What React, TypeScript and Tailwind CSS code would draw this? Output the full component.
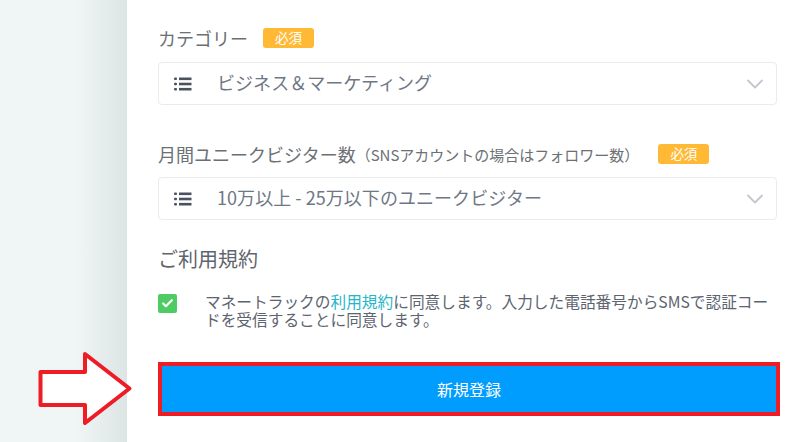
import { ChevronDown, Check } from "lucide-react";

const font = { fontFamily: '"Noto Sans CJK JP", "Noto Sans", sans-serif' };

function RequiredBadge() {
  return (
    <span className="flex h-[20px] w-[51px] items-center justify-center rounded-[3px] bg-[#ffb934] text-[13.5px] leading-none text-white">
      必須
    </span>
  );
}

function ListIcon() {
  return (
    <svg width="18" height="14" viewBox="0 0 18 14" className="shrink-0 text-[#4a5261]" fill="currentColor">
      <rect x="0" y="0.5" width="3" height="2.6" rx="1" />
      <rect x="0" y="5.7" width="3" height="2.6" rx="1" />
      <rect x="0" y="10.9" width="3" height="2.6" rx="1" />
      <rect x="5" y="0.5" width="12.5" height="2.6" />
      <rect x="5" y="5.7" width="12.5" height="2.6" />
      <rect x="5" y="10.9" width="12.5" height="2.6" />
    </svg>
  );
}

function SelectBox({ value }: { value: string }) {
  return (
    <div className="flex h-[43px] w-[619px] items-center rounded-[4px] border border-[#e9ebee] bg-white pl-[15px] pr-[7px]">
      <ListIcon />
      <span className="ml-[25px] flex-1 pb-[3px] text-[18px] leading-none tracking-[0.05px] text-[#6f7785]">{value}</span>
      <ChevronDown className="h-[28px] w-[28px] text-[#c3c8d0]" strokeWidth={1.6} />
    </div>
  );
}

export default function App() {
  return (
    <div className="relative flex h-[442px] w-[800px] overflow-hidden bg-white" style={font}>
      {/* Left side background */}
      <div className="h-full w-[127px] bg-gradient-to-r from-[#f0f6f6] from-60% to-[#dde4e4]" />

      {/* Form */}
      <div className="flex-1 pl-[31px]">
        <div className="mt-[28px] flex h-[20px] items-center">
          <span className="text-[18px] leading-none text-[#6b7075]">カテゴリー</span>
          <span className="ml-[15px]">
            <RequiredBadge />
          </span>
        </div>
        <div className="mt-[14px]">
          <SelectBox value="ビジネス＆マーケティング" />
        </div>

        <div className="mt-[39px] flex h-[20px] items-center">
          <span className="text-[18px] leading-none text-[#6b7075]">月間ユニークビジター数</span>
          <span className="text-[15px] leading-none text-[#6b7075]">（SNSアカウントの場合はフォロワー数）</span>
          <span className="ml-[19px]">
            <RequiredBadge />
          </span>
        </div>
        <div className="mt-[13px]">
          <SelectBox value="10万以上 - 25万以下のユニークビジター" />
        </div>

        <h2 className="mt-[27px] text-[20px] leading-[24px] font-normal text-[#5f656d]">ご利用規約</h2>

        <div className="mt-[21px] flex">
          <span className="mt-[2px] flex h-[19px] w-[19px] shrink-0 items-center justify-center rounded-[2px] bg-[#4fcb64]">
            <Check className="h-[13px] w-[13px] text-white" strokeWidth={4} />
          </span>
          <p className="ml-[28px] w-[566px] pt-[1px] text-[15.7px] leading-[18px] text-[#5c6470]">
            マネートラックの<span className="text-[#26b6c9]">利用規約</span>
            に同意します。入力した電話番号からSMSで認証コードを受信することに同意します。
          </p>
        </div>

        <button className="mt-[33px] flex h-[54px] w-[622px] items-center justify-center border-[4px] border-[#ee1c25] bg-[#009dff] text-[16px] font-normal text-white">
          新規登録
        </button>
      </div>

      {/* Annotation arrow */}
      <svg className="absolute left-[38px] top-[351px]" width="96" height="76" viewBox="0 0 96 76">
        <path
          d="M2.5 21 H47 V3 L91.5 37.5 L47 72 V54 H2.5 Z"
          fill="#fff"
          stroke="#ee1c25"
          strokeWidth="4"
          strokeLinejoin="round"
        />
      </svg>
    </div>
  );
}
